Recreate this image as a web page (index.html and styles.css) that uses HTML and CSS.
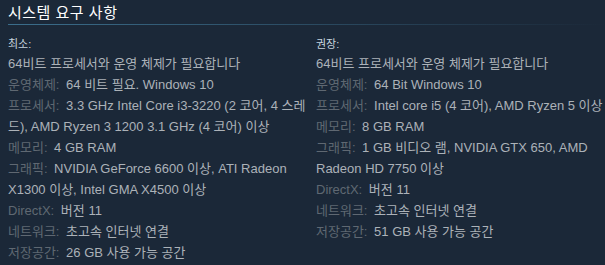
FILE: index.html
```html
<!DOCTYPE html>
<html lang="ko">
<head>
<meta charset="utf-8">
<link rel="stylesheet" href="styles.css">
</head>
<body>
<div class="sysreq">
  <h2 class="title">시스템 요구 사항</h2>
  <div class="cols">
    <div class="col">
      <div class="tier">최소:</div>
      <ul class="list">
        <li>64비트 프로세서와 운영 체제가 필요합니다</li>
        <li><span class="lbl">운영체제:</span> 64 비트 필요. Windows 10</li>
        <li><span class="lbl">프로세서:</span> 3.3 GHz Intel Core i3-3220 (2 코어, 4 스레드), AMD Ryzen 3 1200 3.1 GHz (4 코어) 이상</li>
        <li><span class="lbl">메모리:</span> 4 GB RAM</li>
        <li><span class="lbl">그래픽:</span> NVIDIA GeForce 6600 이상, ATI Radeon X1300 이상, Intel GMA X4500 이상</li>
        <li><span class="lbl">DirectX:</span> 버전 11</li>
        <li><span class="lbl">네트워크:</span> 초고속 인터넷 연결</li>
        <li><span class="lbl">저장공간:</span> 26 GB 사용 가능 공간</li>
      </ul>
    </div>
    <div class="col col-right">
      <div class="tier">권장:</div>
      <ul class="list">
        <li>64비트 프로세서와 운영 체제가 필요합니다</li>
        <li><span class="lbl">운영체제:</span> 64 Bit Windows 10</li>
        <li><span class="lbl">프로세서:</span> Intel core i5 (4 코어), AMD Ryzen 5 이상</li>
        <li><span class="lbl">메모리:</span> 8 GB RAM</li>
        <li><span class="lbl">그래픽:</span> 1 GB 비디오 램, NVIDIA GTX 650, AMD Radeon HD 7750 이상</li>
        <li><span class="lbl">DirectX:</span> 버전 11</li>
        <li><span class="lbl">네트워크:</span> 초고속 인터넷 연결</li>
        <li><span class="lbl">저장공간:</span> 51 GB 사용 가능 공간</li>
      </ul>
    </div>
  </div>
</div>
</body>
</html>
```

FILE: styles.css
```css
html, body {
  margin: 0;
  padding: 0;
  background: #1b2838;
}
body {
  font-family: Arial, "Liberation Sans", "Noto Sans CJK KR", sans-serif;
  color: #acb2b8;
  font-size: 13px;
}
.sysreq {
  padding: 0 0 0 8px;
}
.title {
  margin: 0;
  padding-top: 3px;
  height: 21px;
  font-size: 15px;
  font-weight: normal;
  color: #ffffff;
  line-height: 20px;
  letter-spacing: 0.5px;
  border-bottom: 1px solid transparent;
  border-image: linear-gradient(to right, #3b6e8c 0%, rgba(59, 110, 140, 0) 100%) 1;
}
.cols {
  display: grid;
  grid-template-columns: 308px 1fr;
  padding-top: 11px;
}
.col {
  padding-right: 8px;
}
.col-right {
  padding-right: 2px;
}
.tier {
  font-size: 11px;
  line-height: 16px;
  color: #c6d4df;
  margin-bottom: 1px;
}
.list {
  list-style: none;
  margin: 0;
  padding: 0;
}
.list li {
  line-height: 21px;
}
.lbl {
  color: #5f6872;
  margin-right: 3px;
}
```
